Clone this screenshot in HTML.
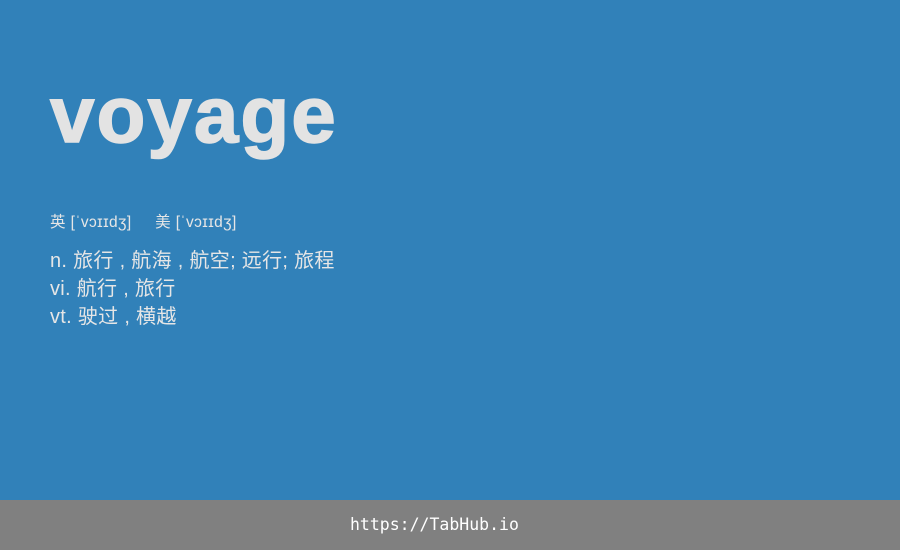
<!DOCTYPE html>
<html><head><meta charset="utf-8"><style>
body{margin:0;width:900px;height:550px;background:#3181b9;position:relative;overflow:hidden;font-family:"Liberation Sans","Noto Sans CJK SC",sans-serif;color:#e6e6e6}
.t{position:absolute;left:50px;top:75px;font-size:80px;font-weight:bold;letter-spacing:2px;line-height:80px;color:#e3e3e3;-webkit-text-stroke:1.5px #e3e3e3}
.p{position:absolute;left:50px;top:212px;font-size:15.5px;line-height:22px;letter-spacing:0.4px}
.d{position:absolute;left:50px;top:247px;font-size:20px;line-height:28px;letter-spacing:0.3px}
.f{position:absolute;left:350px;top:500px;height:50px;color:#fff;font-family:"DejaVu Sans Mono",monospace;font-size:16.5px;line-height:50px}
.fb{position:absolute;left:0;top:500px;width:900px;height:50px;background:#808080}
</style></head><body>
<div class="t">voyage</div>
<div class="p">英 [ˈvɔɪɪdʒ]&nbsp;&nbsp;&nbsp;&nbsp;&nbsp;美 [ˈvɔɪɪdʒ]</div>
<div class="d">n. 旅行 , 航海 , 航空; 远行; 旅程<br>vi. 航行 , 旅行<br>vt. 驶过 , 横越</div>
<div class="fb"></div>
<div class="f">https://TabHub.io</div>
</body></html>
